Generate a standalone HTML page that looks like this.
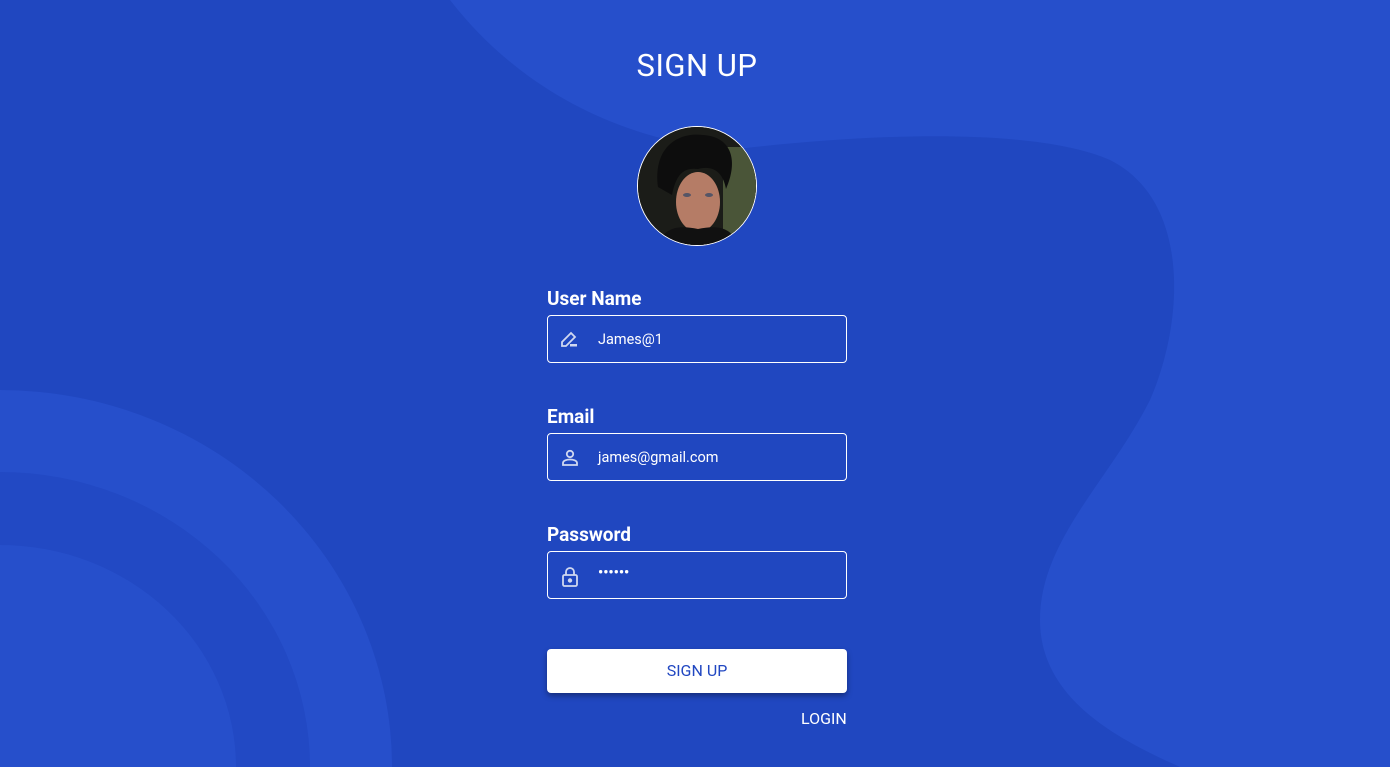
<!DOCTYPE html>
<html style="width:1390px;height:767px;overflow:hidden"><head><meta charset="utf-8"><style>
*{margin:0;padding:0;box-sizing:border-box}
body{width:1390px;height:767px;overflow:hidden;background:#2047c0;font-family:"Roboto","Liberation Sans",sans-serif;color:#fff;position:relative}
svg.bg{position:absolute;left:0;top:0;display:block}
h1{position:absolute;top:48px;left:2px;width:1390px;text-align:center;font-weight:400;font-size:31px;letter-spacing:0.5px;line-height:36px}
.av{position:absolute;left:637px;top:126px;width:120px;height:120px;border-radius:50%;border:1.5px solid #fff;overflow:hidden;background:#1a1a18}
.av svg{display:block}
label{position:absolute;left:547px;font-weight:700;font-size:19px;line-height:22px}
.in{position:absolute;left:547px;width:300px;height:48px;border:1px solid #fff;border-radius:4px;font-size:14.5px}
.in span{position:absolute;left:50px;top:15px;line-height:17px}
.in svg{position:absolute;left:11px;top:13px}
.btn{position:absolute;left:547px;top:649px;width:300px;height:44px;background:#fff;border-radius:4px;color:#2147c1;font-size:16px;text-align:center;line-height:44px;box-shadow:0 3px 6px rgba(0,0,0,.35)}
.login{position:absolute;left:801px;top:709px;font-size:16px;line-height:19px}
</style></head><body>
<svg class="bg" width="1390" height="767">
<path d="M450 0 C520 90 620 140 730 150 C850 135 1030 125 1110 160 C1190 200 1185 320 1150 400 C1110 480 1040 540 1040 620 C1040 700 1120 740 1180 767 L1390 767 L1390 0 Z" fill="#264fcb"/>
<ellipse cx="0" cy="767" rx="392" ry="377" fill="#264fcb"/>
<ellipse cx="0" cy="767" rx="310" ry="295" fill="#2249c4"/>
<ellipse cx="0" cy="767" rx="236" ry="222" fill="#264fcb"/>
</svg>
<h1>SIGN UP</h1>
<div class="av"><svg width="120" height="120" viewBox="0 0 120 120">
<rect width="120" height="120" fill="#1b1c18"/>
<rect x="85" y="20" width="35" height="90" fill="#4a5538"/>
<ellipse cx="60" cy="75" rx="22" ry="30" fill="#b57c66"/>
<path d="M20 60 C15 20 40 5 65 8 C95 10 100 35 88 62 C85 45 75 38 60 42 C45 40 38 48 34 68 Z" fill="#0d0d0d"/>
<path d="M20 120 C25 100 40 98 60 102 C80 98 95 100 100 120 Z" fill="#111"/>
<ellipse cx="49" cy="68" rx="4" ry="2" fill="#556"/><ellipse cx="71" cy="68" rx="4" ry="2" fill="#556"/>
</svg></div>
<label style="top:288px">User Name</label>
<div class="in" style="top:315px"><svg width="22" height="22" viewBox="0 0 22 22" fill="none" stroke="#d0d8f0" stroke-width="1.8"><path d="M3 17 L3 13 L12 4 L16 8 L7 17 Z"/><rect x="11" y="15" width="7" height="2.5" fill="#d0d8f0" stroke="none"/></svg><span>James@1</span></div>
<label style="top:406px">Email</label>
<div class="in" style="top:433px"><svg width="22" height="22" viewBox="0 0 22 22" fill="none" stroke="#d0d8f0" stroke-width="1.8"><circle cx="11" cy="7" r="3.2"/><path d="M4 18 V16 C4 13.5 8 12.5 11 12.5 C14 12.5 18 13.5 18 16 V18 Z"/></svg><span>james@gmail.com</span></div>
<label style="top:524px">Password</label>
<div class="in" style="top:551px"><svg width="22" height="24" viewBox="0 0 22 24" fill="none" stroke="#d0d8f0" stroke-width="1.8"><path d="M7 10 V7 A4 4 0 0 1 15 7 V10"/><rect x="4" y="10" width="14" height="11" rx="1.5"/><circle cx="11" cy="15.5" r="1.3" fill="#d0d8f0"/></svg><span style="top:12px;font-weight:700">••••••</span></div>
<div class="btn">SIGN UP</div>
<div class="login">LOGIN</div>
</body></html>
